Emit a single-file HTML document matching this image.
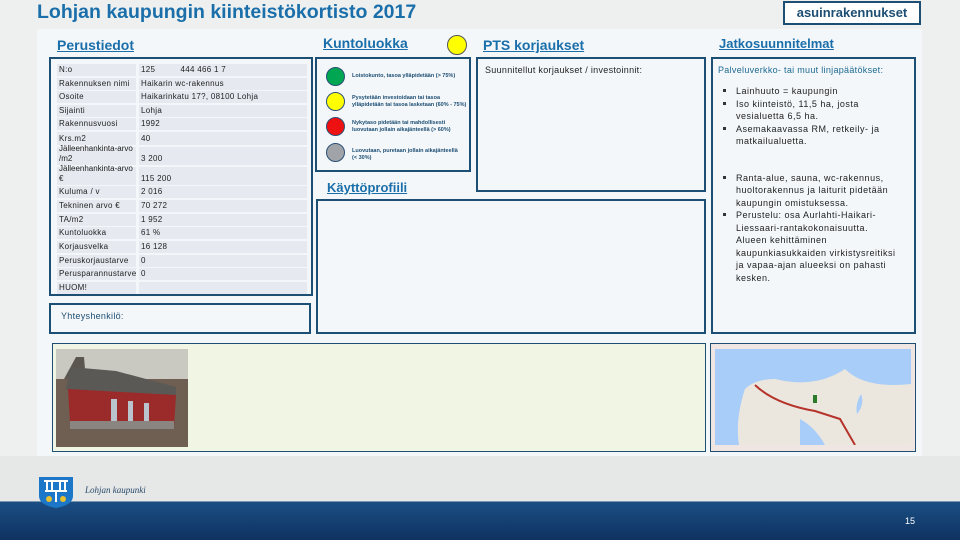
<!DOCTYPE html>
<html><head><meta charset="utf-8"><style>
*{margin:0;padding:0;box-sizing:border-box}
body{width:960px;height:540px;overflow:hidden;background:#eef0f0;font-family:"Liberation Sans",sans-serif;position:relative}
.a{position:absolute}
.h{color:#1a6faa;font-weight:bold;text-decoration:underline;font-size:14px}
.bx{position:absolute;border:2px solid #1d4e73}
.r{position:absolute;left:6px;width:250px;font-size:8px;color:#222;letter-spacing:.3px}
.r span{position:absolute;top:0;bottom:0;background:#e6e9f0;padding-left:2px;display:flex;align-items:flex-end;line-height:10px;padding-bottom:1px}
.l{left:0;width:79px}.v{left:82px;width:168px}
.c{position:absolute;left:9px;width:19px;height:19px;border-radius:50%;border:1px solid #2a4f77}
.ct{position:absolute;left:35px;font-size:5.5px;color:#1d4e73;font-weight:bold;line-height:7px}
ul{list-style:none}
li{position:relative;padding-left:18px;font-size:9px;line-height:12.5px;color:#222;letter-spacing:.5px}
li:before{content:"";position:absolute;left:5px;top:4px;width:3px;height:3px;background:#333}
</style></head><body>
<div class="a" style="left:37px;top:1px;font-size:19.5px;font-weight:bold;color:#1a6faa">Lohjan kaupungin kiinteistökortisto 2017</div>
<div class="a" style="left:783px;top:1px;width:138px;height:24px;border:2px solid #1d4e73;background:#fff;color:#1d4e73;font-weight:bold;font-size:13px;text-align:center;line-height:20px">asuinrakennukset</div>
<div class="a" style="left:37px;top:29px;width:885px;height:427px;background:#f4f7fa"></div>
<div class="a h" style="left:57px;top:37px">Perustiedot</div>
<div class="a h" style="left:323px;top:35px">Kuntoluokka</div>
<div class="a" style="left:447px;top:35px;width:20px;height:20px;border-radius:50%;background:#ffff00;border:1px solid #555"></div>
<div class="a h" style="left:483px;top:37px">PTS korjaukset</div>
<div class="a h" style="left:719px;top:36px;font-size:13px">Jatkosuunnitelmat</div>
<div class="bx" style="left:49px;top:57px;width:264px;height:239px">
<div class="r" style="top:5px;height:12px"><span class="l">N:o</span><span class="v">125 &nbsp;&nbsp;&nbsp;&nbsp;&nbsp;&nbsp;&nbsp;&nbsp;&nbsp;444 466 1 7</span></div>
<div class="r" style="top:19px;height:12px"><span class="l">Rakennuksen nimi</span><span class="v">Haikarin wc-rakennus</span></div>
<div class="r" style="top:32px;height:12px"><span class="l">Osoite</span><span class="v">Haikarinkatu 17?, 08100 Lohja</span></div>
<div class="r" style="top:46px;height:12px"><span class="l">Sijainti</span><span class="v">Lohja</span></div>
<div class="r" style="top:59px;height:12px"><span class="l">Rakennusvuosi</span><span class="v">1992</span></div>
<div class="r" style="top:73px;height:13px"><span class="l">Krs.m2</span><span class="v">40</span></div>
<div class="r" style="top:88px;height:18px"><span class="l" style="letter-spacing:0">Jälleenhankinta-arvo<br>/m2</span><span class="v">3 200</span></div>
<div class="r" style="top:108px;height:18px"><span class="l" style="letter-spacing:0">Jälleenhankinta-arvo<br>€</span><span class="v">115 200</span></div>
<div class="r" style="top:127px;height:12px"><span class="l">Kuluma / v</span><span class="v">2 016</span></div>
<div class="r" style="top:141px;height:12px"><span class="l">Tekninen arvo €</span><span class="v">70 272</span></div>
<div class="r" style="top:155px;height:12px"><span class="l">TA/m2</span><span class="v">1 952</span></div>
<div class="r" style="top:168px;height:12px"><span class="l">Kuntoluokka</span><span class="v">61 %</span></div>
<div class="r" style="top:182px;height:12px"><span class="l">Korjausvelka</span><span class="v">16 128</span></div>
<div class="r" style="top:196px;height:12px"><span class="l">Peruskorjaustarve</span><span class="v">0</span></div>
<div class="r" style="top:209px;height:12px"><span class="l">Perusparannustarve</span><span class="v">0</span></div>
<div class="r" style="top:223px;height:12px"><span class="l">HUOM!</span><span class="v"></span></div>
</div>
<div class="bx" style="left:49px;top:303px;width:262px;height:31px"><div class="a" style="left:10px;top:6px;font-size:9px;color:#1d4e73;letter-spacing:.3px">Yhteyshenkilö:</div></div>
<div class="bx" style="left:315px;top:57px;width:156px;height:115px">
<div class="c" style="top:8px;background:#00a651"></div><div class="ct" style="top:14px">Loistokunto, tasoa ylläpidetään (&gt; 75%)</div>
<div class="c" style="top:33px;background:#ffff00"></div><div class="ct" style="top:36px">Pysytetään investoidaan tai tasoa<br>ylläpidetään tai tasoa lasketaan (60% - 75%)</div>
<div class="c" style="top:58px;background:#ee1111"></div><div class="ct" style="top:61px">Nykytaso pidetään tai mahdollisesti<br>luovutaan jollain aikajänteellä (&gt; 60%)</div>
<div class="c" style="top:84px;background:#a0a4a8"></div><div class="ct" style="top:89px">Luovutaan, puretaan jollain aikajänteellä<br>(&lt; 30%)</div>
</div>
<div class="a h" style="left:327px;top:180px;font-size:13px">Käyttöprofiili</div>
<div class="bx" style="left:316px;top:199px;width:390px;height:135px"></div>
<div class="bx" style="left:476px;top:57px;width:230px;height:135px;background:#f4f7fa"><div class="a" style="left:7px;top:6px;font-size:9px;color:#222;letter-spacing:.3px">Suunnitellut korjaukset / investoinnit:</div></div>
<div class="bx" style="left:711px;top:57px;width:205px;height:277px">
<div class="a" style="left:5px;top:6px;font-size:9px;color:#1d6a90;letter-spacing:.3px;white-space:nowrap">Palveluverkko- tai muut linjapäätökset:</div>
<ul class="a" style="left:5px;top:26px;width:180px">
<li>Lainhuuto = kaupungin</li>
<li>Iso kiinteistö, 11,5 ha, josta vesialuetta 6,5 ha.</li>
<li>Asemakaavassa RM, retkeily- ja matkailualuetta.</li>
<li style="margin-top:24px">Ranta-alue, sauna, wc-rakennus, huoltorakennus ja laiturit pidetään kaupungin omistuksessa.</li>
<li>Perustelu: osa Aurlahti-Haikari-Liessaari-rantakokonaisuutta. Alueen kehittäminen kaupunkiasukkaiden virkistysreitiksi ja vapaa-ajan alueeksi on pahasti kesken.</li>
</ul></div>
<div class="a" style="left:52px;top:343px;width:654px;height:109px;background:#f0f5e4;border:1px solid #1d4e73">
<svg class="a" style="left:3px;top:5px" width="132" height="98"><rect width="132" height="98" fill="#6e5f52"/><rect width="132" height="30" fill="#c9c9c2"/><path d="M8 30 L20 8 L28 8 L30 32" fill="#5b5650"/><polygon points="15,18 60,22 120,38 120,46 10,40" fill="#5a5956"/><polygon points="12,40 120,46 118,78 14,74" fill="#9b2a2a"/><rect x="14" y="72" width="104" height="8" fill="#8a8580"/><rect x="55" y="50" width="6" height="22" fill="#b9c4cc"/><rect x="72" y="52" width="5" height="20" fill="#b9c4cc"/><rect x="88" y="54" width="5" height="18" fill="#b9c4cc"/></svg>
</div>
<div class="a" style="left:710px;top:343px;width:206px;height:109px;background:#efe6e4;border:1px solid #1d4e73">
<svg class="a" style="left:4px;top:5px" width="196" height="96"><rect width="196" height="96" fill="#ebe7df"/><path d="M0 0 H196 V35 Q150 40 130 20 Q100 40 60 30 Q40 30 30 40 Q20 70 24 96 H0Z" fill="#a8cdf8"/><path d="M85 70 Q100 78 110 96 H85Z" fill="#a8cdf8"/><path d="M146 45 Q150 55 142 65 Q140 55 146 45Z" fill="#a8cdf8"/><path d="M40 36 Q60 55 100 62 L125 70 L140 96" stroke="#b5332a" stroke-width="2" fill="none"/><rect x="98" y="46" width="4" height="8" fill="#2a7a2a"/></svg>
</div>
<div class="a" style="left:0;top:456px;width:960px;height:46px;background:#e6e8e8"></div>
<div class="a" style="left:0;top:501px;width:960px;height:39px;background:linear-gradient(#1a4e84,#0f3260);border-top:1px solid #7a95b0"></div>
<svg class="a" style="left:38px;top:476px" width="37" height="33"><path d="M1 1 H35 V20 Q35 29 18 32 Q1 29 1 20Z" fill="#1d77c8"/><path d="M6 5 H30 M9 5 V15 M14 5 V15 M22 5 V15 M27 5 V15 M7 15 H29 M18 15 V26" stroke="#fff" stroke-width="2" fill="none"/><circle cx="11" cy="23" r="3" fill="#e8c030"/><circle cx="25" cy="23" r="3" fill="#e8c030"/></svg>
<div class="a" style="left:85px;top:485px;font-family:'Liberation Serif',serif;font-style:italic;font-size:9px;color:#2a4a6a">Lohjan kaupunki</div>
<div class="a" style="left:905px;top:516px;font-size:9px;color:#fff">15</div>
</body></html>
